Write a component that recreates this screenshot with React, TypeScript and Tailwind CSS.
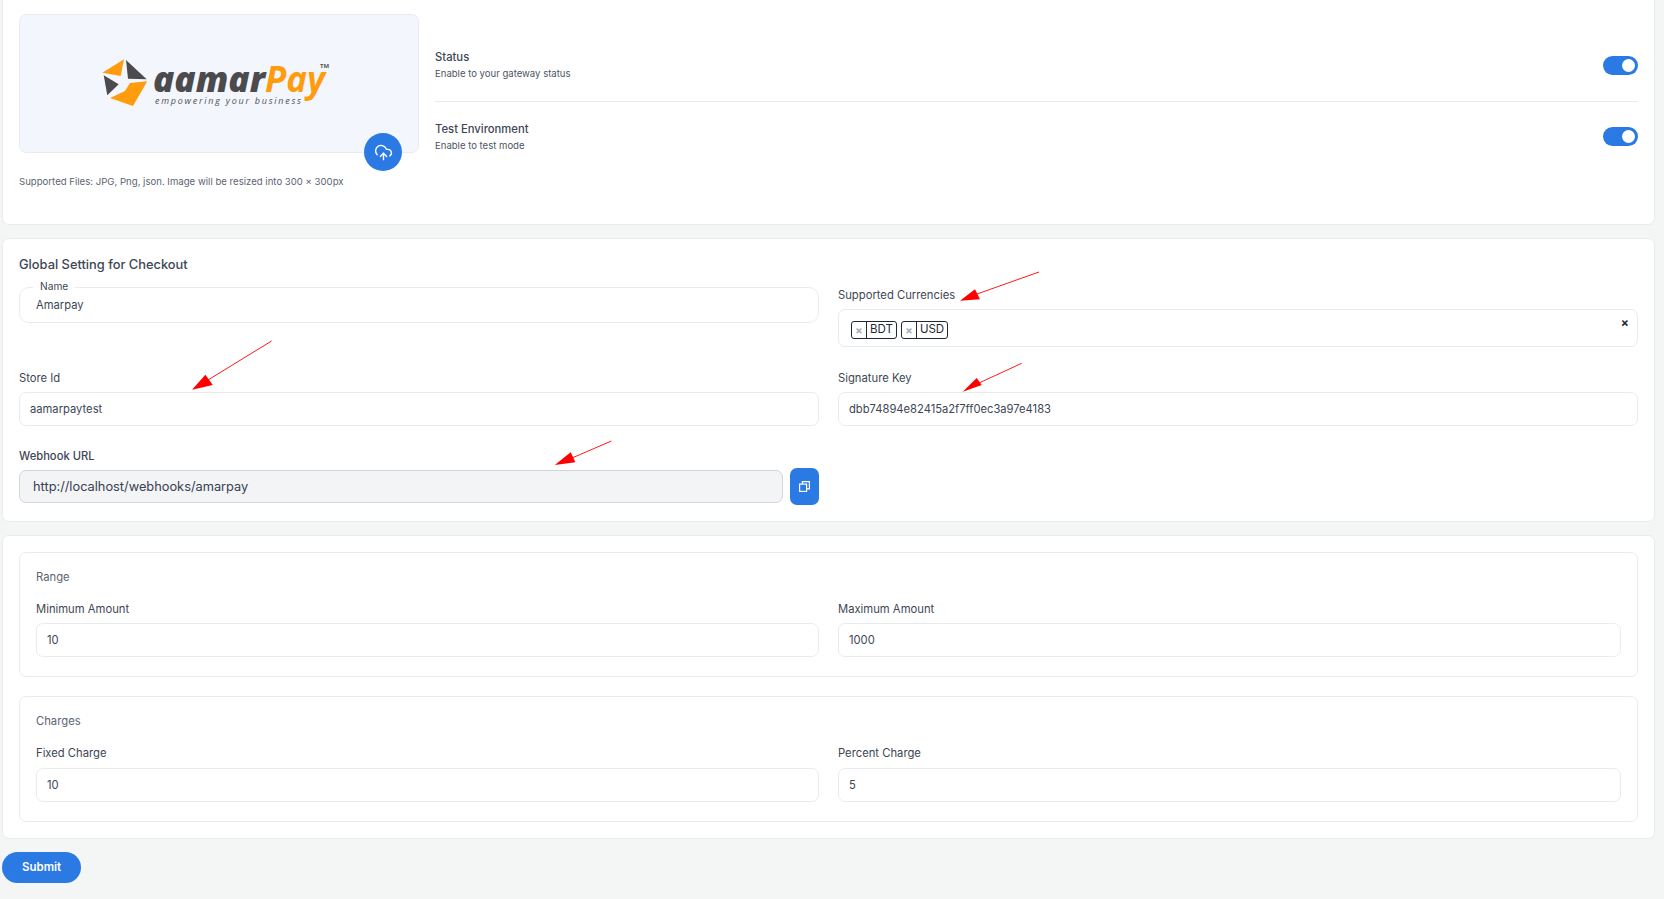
import React from "react";
import { CloudUpload } from "lucide-react";

function Logo() {
  return (
    <svg width="238" height="51" viewBox="100 58 238 51">
      <polygon points="124,59.3 102.3,72.7 120.7,76" fill="#ff9c0e" />
      <polygon points="126,60 146.7,79.3 128,78.7" fill="#4b4b4d" />
      <polygon points="103.7,75.3 118.7,84.3 107.3,95.3" fill="#4b4b4d" />
      <polygon points="147.3,81.3 130,83 125,91 110,98 133,106" fill="#ff9c0e" />
      <text x="153" y="92" fontFamily="'Open Sans',sans-serif" fontStyle="italic" fontWeight="800" fontSize="36" fill="#4b4b4d" textLength="112" lengthAdjust="spacingAndGlyphs">aamar</text>
      <text x="265" y="92" fontFamily="'Open Sans',sans-serif" fontStyle="italic" fontWeight="700" fontSize="36" fill="#ff9c0e" textLength="60" lengthAdjust="spacingAndGlyphs">Pay</text>
      <text x="155" y="103.5" fontFamily="'Open Sans',sans-serif" fontStyle="italic" fontWeight="500" fontSize="9" fill="#555" textLength="146">empowering your business</text>
      <text x="320" y="68" fontFamily="'Open Sans',sans-serif" fontWeight="700" fontSize="6" fill="#555">TM</text>
    </svg>
  );
}

function Toggle() {
  return (
    <div className="w-[35px] h-[19px] rounded-full bg-[#2b7ae4] flex items-center justify-end pr-[3px]">
      <div className="w-[13px] h-[13px] rounded-full bg-white" />
    </div>
  );
}

function SwitchRow({ title, sub, cls }: { title: string; sub: string; cls: string }) {
  return (
    <div className={`flex items-center justify-between ${cls}`}>
      <div>
        <div className="text-[11.25px] leading-[18px] font-medium text-[#3d4654]">{title}</div>
        <div className="text-[9.55px] leading-[16px] text-[#4b5563]">{sub}</div>
      </div>
      <Toggle />
    </div>
  );
}

function Field({ label, value, gap = "mt-[6px]" }: { label: string; value: string; gap?: string }) {
  return (
    <div>
      <div className="text-[11.25px] leading-[16px] text-[#3d4654]">{label}</div>
      <div className={`${gap} h-[34px] border border-[#e9ecef] rounded-[7px] bg-white flex items-center pl-[10px] pt-[1px] text-[11.2px] text-[#3d4654]`}>
        {value}
      </div>
    </div>
  );
}

function Chip({ label }: { label: string }) {
  return (
    <div className="h-[18px] border border-[#1f2937] rounded-[3px] flex items-center text-[11.5px] text-[#1f2937]">
      <span className="w-[15px] h-full border-r border-[#1f2937] flex items-center justify-center text-[11px] font-bold text-[#a8adb5]">×</span>
      <span className="px-[3px]">{label}</span>
    </div>
  );
}

function Arrows() {
  const arrows = [
    { tail: "1039,272 977,294", head: "960,300.7 975,289.3 980,299.3" },
    { tail: "1021.7,363.3 979,383", head: "962.7,391.7 976.7,378 981.7,385" },
    { tail: "271.6,341 208,380", head: "192,389.7 205.4,374.7 212.8,385" },
    { tail: "611.4,441 572,458", head: "554.8,465 570.7,452.3 575.4,462.3" },
  ];
  return (
    <svg className="absolute left-0 top-0 pointer-events-none" width="1664" height="899">
      {arrows.map((a, i) => (
        <g key={i}>
          <polyline points={a.tail} stroke="#ff1a1a" strokeWidth="1" fill="none" />
          <polygon points={a.head} fill="#ff0000" />
        </g>
      ))}
    </svg>
  );
}

export default function App() {
  return (
    <div className="relative w-[1664px] h-[899px] overflow-hidden bg-[#f4f6f6] pl-[2px] pr-[9px] font-['Inter',sans-serif]">
      {/* Card 1 */}
      <div className="h-[225px] bg-white border border-t-0 border-[#e9ecef] rounded-b-[7px] px-[16px] pt-[14px] flex gap-[16px]">
        <div className="w-[400px]">
          <div className="relative h-[139px] bg-[#f3f6fd] border border-[#e9ecef] rounded-[7px] flex items-center justify-center">
            <Logo />
            <div className="absolute right-[16px] bottom-[-19px] w-[38px] h-[38px] rounded-full bg-[#2b7ae4] flex items-center justify-center text-white">
              <CloudUpload size={19} strokeWidth={1.7} />
            </div>
          </div>
          <div className="mt-[22px] text-[9.6px] leading-[14px] text-[#5b6472]">
            Supported Files: JPG, Png, json. Image will be resized into 300 × 300px
          </div>
        </div>
        <div className="flex-1 pt-[17px]">
          <SwitchRow title="Status" sub="Enable to your gateway status" cls="h-[71px] pb-[2px] border-b border-[#e9ecef]" />
          <SwitchRow title="Test Environment" sub="Enable to test mode" cls="h-[69px]" />
        </div>
      </div>

      {/* Card 2 */}
      <div className="mt-[13px] bg-white border border-[#e9ecef] rounded-[7px] px-[16px] pt-[16px] pb-[16px]">
        <div className="text-[12.85px] leading-[20px] font-medium text-[#3d4654]">Global Setting for Checkout</div>
        <div className="mt-[5px] grid grid-cols-2 gap-x-[19px] items-start">
          <div className="h-[90px]">
            <fieldset className="h-[43px] border border-[#e9ecef] rounded-[10px] pl-[13px]">
              <legend className="relative -top-px ml-0 px-[7px] text-[10.2px] leading-[14px] text-[#3d4654]">Name</legend>
              <div className="mt-[3px] pl-[3px] text-[11.2px] leading-[16px] text-[#3d4654]">Amarpay</div>
            </fieldset>
          </div>
          <div className="h-[90px] pt-[7px]">
            <div className="text-[11.25px] leading-[16px] text-[#3d4654]">Supported Currencies</div>
            <div className="relative mt-[6px] h-[38px] border border-[#e9ecef] rounded-[7px] flex items-center pl-[12px] pt-[4px] gap-[4px]">
              <Chip label="BDT" />
              <Chip label="USD" />
              <span className="absolute right-[8px] top-[6px] text-[12px] leading-[14px] font-bold text-[#1f2937]">×</span>
            </div>
          </div>
          <Field label="Store Id" value="aamarpaytest" />
          <Field label="Signature Key" value="dbb74894e82415a2f7ff0ec3a97e4183" />
          <div className="mt-[22px]">
            <div className="text-[11.2px] leading-[16px] font-medium text-[#3d4654]">Webhook URL</div>
            <div className="mt-[4px] flex items-center gap-[7px]">
              <div className="flex-1 h-[33px] border border-[#d1d5db] rounded-[7px] bg-[#f3f4f6] flex items-center pl-[13px] text-[12.8px] text-[#374151]">
                http://localhost/webhooks/amarpay
              </div>
              <div className="w-[29px] h-[37px] rounded-[7px] bg-[#2b7ae4] flex items-center justify-center">
                <svg width="11" height="11" viewBox="0 0 11 11" fill="none" stroke="white" strokeWidth="1.2">
                  <rect x="0.6" y="3.1" width="7" height="7.3" />
                  <path d="M3.4 3V0.6H10.4V7.8H7.6" />
                </svg>
              </div>
            </div>
          </div>
        </div>
      </div>

      {/* Card 3 */}
      <div className="mt-[13px] bg-white border border-[#e9ecef] rounded-[7px] px-[16px] pt-[16px] pb-[16px]">
        <div className="border border-[#e9ecef] rounded-[7px] px-[16px] pt-[16px] pb-[19px]">
          <div className="text-[11.25px] leading-[16px] text-[#5b6472]">Range</div>
          <div className="mt-[16px] grid grid-cols-2 gap-x-[19px]">
            <Field label="Minimum Amount" value="10" />
            <Field label="Maximum Amount" value="1000" />
          </div>
        </div>
        <div className="mt-[19px] border border-[#e9ecef] rounded-[7px] px-[16px] pt-[16px] pb-[19px]">
          <div className="text-[11.25px] leading-[16px] text-[#5b6472]">Charges</div>
          <div className="mt-[16px] grid grid-cols-2 gap-x-[19px]">
            <Field label="Fixed Charge" value="10" gap="mt-[7px]" />
            <Field label="Percent Charge" value="5" gap="mt-[7px]" />
          </div>
        </div>
      </div>

      <div className="mt-[13px] w-[79px] h-[31px] rounded-full bg-[#2b7ae4] flex items-center justify-center text-[11.5px] font-semibold text-white">
        Submit
      </div>

      <Arrows />
    </div>
  );
}
